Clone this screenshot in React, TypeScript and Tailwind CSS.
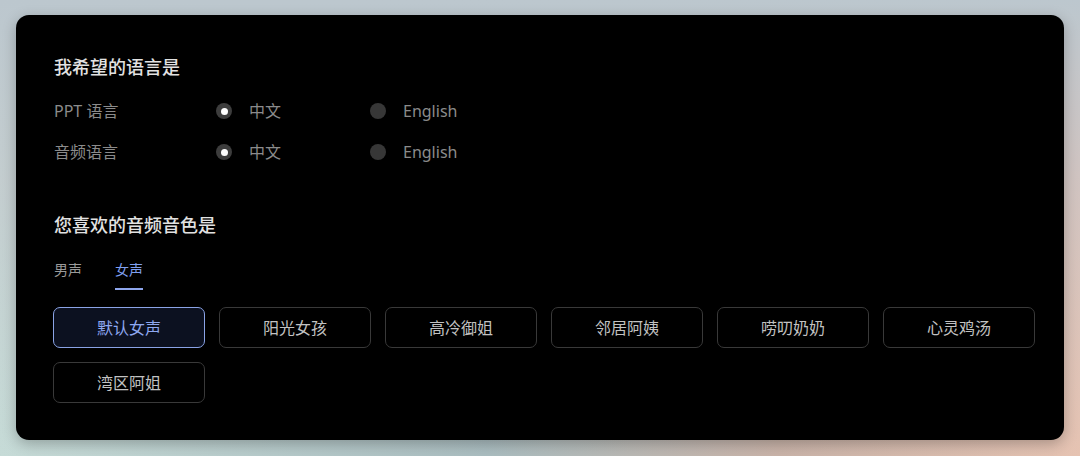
import React from "react";

const font = { fontFamily: '"Noto Sans", "Noto Sans CJK SC", sans-serif' };

function Radio({ checked }: { checked: boolean }) {
  return checked ? (
    <span className="flex h-4 w-4 items-center justify-center rounded-full bg-[#3d3d3d]">
      <span className="h-[7px] w-[7px] rounded-full bg-white" />
    </span>
  ) : (
    <span className="h-4 w-4 rounded-full bg-[#373737]" />
  );
}

function LangRow({ label }: { label: string }) {
  return (
    <div className="flex h-6 items-center text-[16px] text-[#8b8b8b]">
      <div className="w-[162px]">{label}</div>
      <div className="flex w-[154px] items-center gap-[17px]">
        <Radio checked />
        <span>中文</span>
      </div>
      <div className="flex items-center gap-[17px]">
        <Radio checked={false} />
        <span>English</span>
      </div>
    </div>
  );
}

const voices = ["默认女声", "阳光女孩", "高冷御姐", "邻居阿姨", "唠叨奶奶", "心灵鸡汤", "湾区阿姐"];

export default function App() {
  return (
    <div
      className="h-[456px] w-[1080px] overflow-hidden bg-[linear-gradient(90deg,#c6dbd7_0%,#aabdc0_45%,#c9b3a8_72%,#e6c3b2_100%)]"
      style={font}
    >
      <div className="h-full w-full bg-[linear-gradient(180deg,rgba(188,199,206,1)_0%,rgba(194,196,202,0.6)_40%,rgba(200,200,200,0)_100%)] pt-[15px] pl-4 pr-4">
        <div className="h-[425px] rounded-[13px] bg-black pt-[40px] pl-[37px] pr-[30px] shadow-[0_4px_14px_rgba(0,0,0,0.25)]">
          <h2 className="pl-[1px] text-[18px] leading-6 font-medium text-[#e2e2e2]">我希望的语言是</h2>
          <div className="mt-5 flex flex-col gap-[17px] pl-[1px]">
            <LangRow label="PPT 语言" />
            <LangRow label="音频语言" />
          </div>
          <h2 className="mt-[49px] pl-[1px] text-[18px] leading-6 font-medium text-[#e2e2e2]">您喜欢的音频音色是</h2>
          <div className="mt-[23px] flex gap-[33px] pl-[1px] text-[14px] leading-5">
            <div className="border-b-2 border-transparent pb-2 text-[#9a9a9a]">男声</div>
            <div className="border-b-2 border-[#8ea6ec] pb-2 text-[#7f9ff0]">女声</div>
          </div>
          <div className="mt-[17px] grid grid-cols-[repeat(6,152px)] gap-[14px]">
            {voices.map((v, i) => (
              <div
                key={v}
                className={
                  i === 0
                    ? "flex h-[41px] items-center justify-center rounded-[7px] border border-[#8aa3e6] bg-[#0c1120] text-[16px] text-[#8ea8f0]"
                    : "flex h-[41px] items-center justify-center rounded-[7px] border border-[#393939] text-[16px] text-[#c2c2c2]"
                }
              >
                {v}
              </div>
            ))}
          </div>
        </div>
      </div>
    </div>
  );
}
